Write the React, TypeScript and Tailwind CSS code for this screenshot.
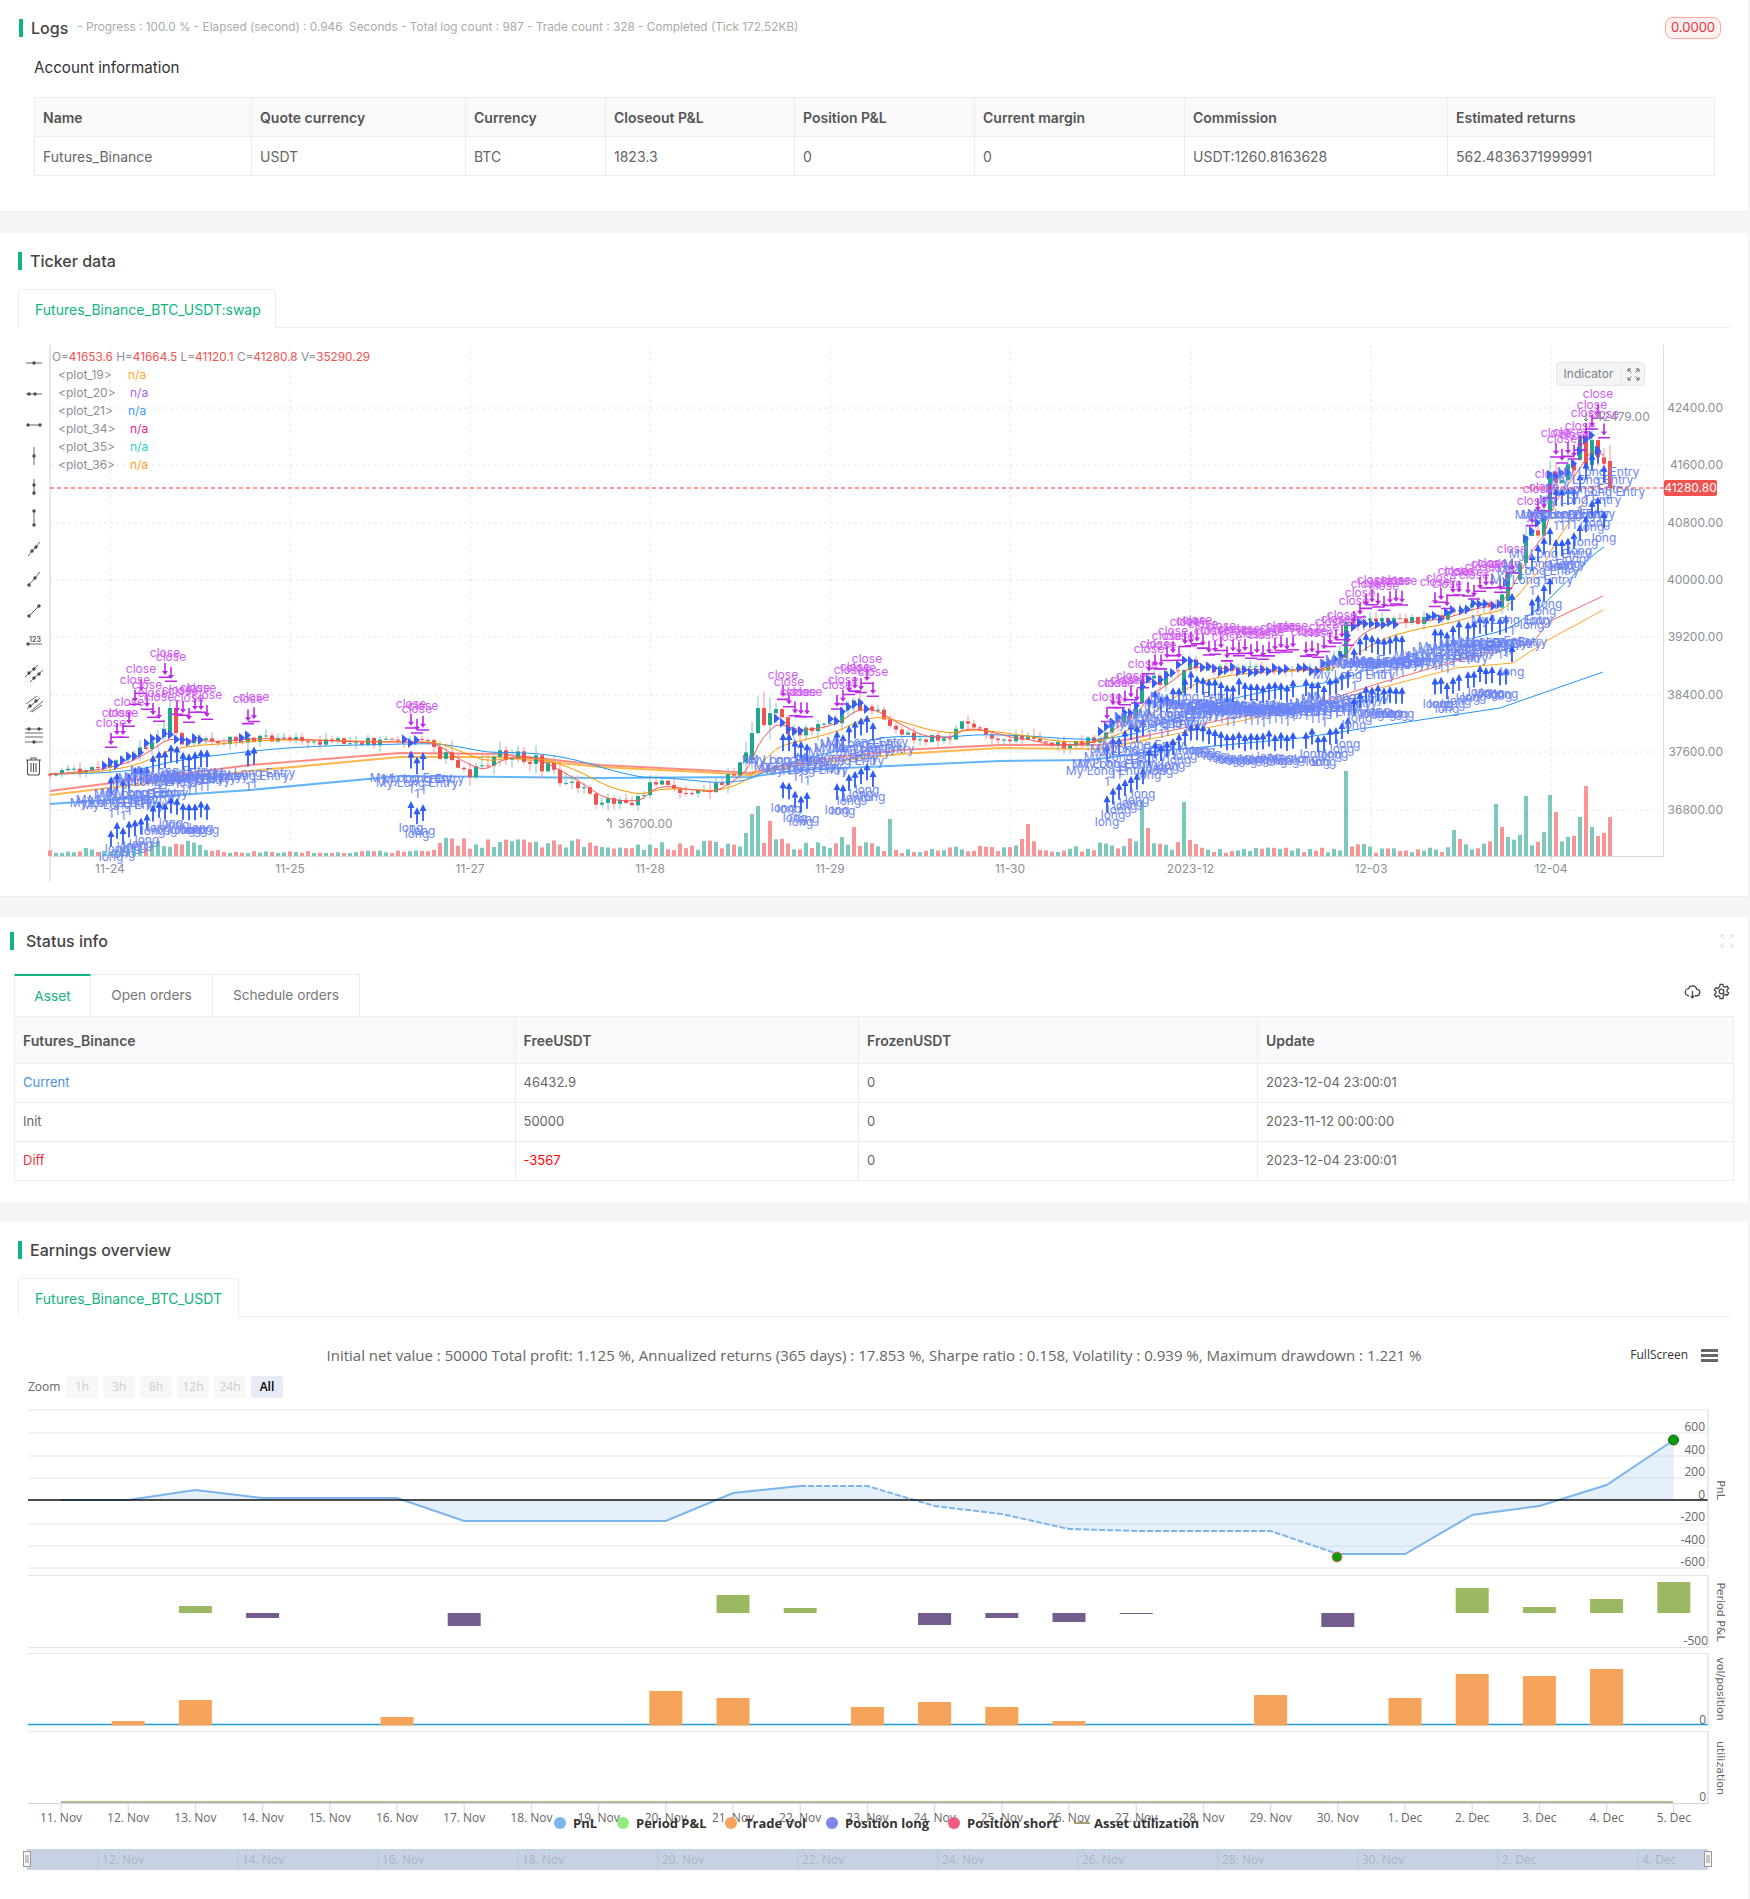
import React from "react";

// deterministic noise so the picture is the same on each load
let seed = 7;
const rnd = () => {
  seed = (seed * 16807) % 2147483647;
  return (seed % 10000) / 10000;
};

const interp = (pts: number[][], x: number) => {
  if (x <= pts[0][0]) return pts[0][1];
  for (let i = 1; i < pts.length; i++) {
    if (x <= pts[i][0]) {
      const [x0, y0] = pts[i - 1];
      const [x1, y1] = pts[i];
      return y0 + ((y1 - y0) * (x - x0)) / (x1 - x0);
    }
  }
  return pts[pts.length - 1][1];
};

const pricePath = [
  [50, 774], [100, 768], [130, 758], [165, 733], [180, 740], [210, 742], [250, 738], [350, 742], [400, 742], [430, 743],
  [455, 765], [480, 774], [500, 754], [530, 758], [570, 783], [600, 803], [620, 802], [640, 800], [650, 780], [680, 790],
  [710, 793], [725, 780], [745, 763], [757, 720], [775, 715], [790, 733], [815, 728], [835, 720], [855, 703], [880, 715],
  [885, 723], [920, 740], [950, 737], [960, 723], [985, 733], [1010, 740], [1025, 740], [1045, 747], [1080, 743], [1095, 740],
  [1110, 723], [1135, 710], [1145, 680], [1160, 683], [1185, 661], [1210, 669], [1270, 670], [1320, 669], [1345, 651], [1350, 626],
  [1370, 622], [1400, 622], [1440, 618], [1470, 606], [1500, 604], [1505, 583], [1525, 540], [1545, 518], [1550, 476], [1570, 469],
  [1590, 432], [1600, 458], [1610, 470],
];

const volZones = [
  [50, 7], [130, 12], [170, 24], [210, 8], [260, 5], [430, 6], [440, 24], [470, 20], [560, 20], [620, 13], [740, 18], [760, 40], [790, 14],
  [840, 22], [870, 16], [900, 7], [1000, 12], [1030, 18], [1060, 8], [1120, 18], [1150, 22], [1200, 9], [1340, 10], [1352, 18], [1380, 8], [1450, 10],
  [1500, 18], [1540, 32], [1610, 32],
];

// hand read peaks of the volume bars [height, red?]
const volPeaks: Record<number, [number, boolean]> = {
  1346: [85, false], 1184: [54, false], 1496: [52, false], 1502: [29, true], 1508: [19, false], 1526: [60, false], 1550: [61, false], 1556: [44, true],
  1586: [70, true], 1580: [39, false], 1610: [39, true], 1604: [23, true], 1592: [29, false], 1598: [20, true], 1454: [26, false], 1460: [17, true],
  442: [28, true], 466: [23, true], 758: [50, false], 752: [42, false], 770: [35, true], 746: [23, false], 890: [37, false], 854: [29, true], 1028: [32, true],
  1022: [17, true], 1142: [54, false], 1148: [28, true], 1190: [16, true], 1178: [14, true], 1196: [12, true],
};

// the tall bodies [open, close]
const bigBodies: Record<number, [number, number]> = {
  170: [735, 708], 176: [708, 733], 752: [760, 733], 758: [733, 708], 764: [708, 725], 1142: [703, 680], 1184: [693, 670], 1346: [658, 622],
  1508: [601, 572], 1520: [580, 563], 1526: [563, 536], 1550: [513, 472], 1580: [460, 436], 1586: [436, 465],
};

type Candle = { x: number; open: number; close: number; hi: number; lo: number; vol: number; up: boolean };

const candles: Candle[] = [];
let prev = 774;
for (let i = 0; i <= 260; i++) {
  const x = 50 + i * 6;
  const base = interp(volZones, x);
  const spread = Math.max(base, 12);
  const v = base * (0.35 + rnd() * 0.6);
  const close = interp(pricePath, x) + (rnd() - 0.5) * spread * 0.7;
  let open = i === 260 ? 461 : prev;
  let c = i === 260 ? 488 : close;
  if (bigBodies[x]) [open, c] = bigBodies[x];
  const hi = Math.min(open, c) - rnd() * spread * 0.55;
  const lo = Math.max(open, c) + rnd() * spread * 0.55;
  const peak = volPeaks[x];
  candles.push({ x, open, close: c, hi, lo, vol: peak ? peak[0] : Math.max(3, v), up: peak ? !peak[1] : c < open });
  prev = c;
}

// moving averages run over the smooth path, not the noisy closes
const ema = (n: number) => {
  const a = 2 / (n + 1);
  const out: string[] = [];
  let e = interp(pricePath, 50);
  for (let x = 50; x < 1610; x += 6) {
    e = e + a * (interp(pricePath, x) - e);
    out.push(`${x},${e.toFixed(1)}`);
  }
  return out.join(" ");
};

const slowBlue = [[50, 804], [250, 790], [400, 776], [600, 778], [750, 777], [800, 770], [1000, 761], [1090, 760], [1150, 752], [1300, 738], [1500, 708], [1603, 672]];
const slowRed = [[50, 791], [250, 765], [400, 753], [500, 754], [600, 765], [700, 770], [750, 773], [800, 762], [900, 750], [1000, 745], [1100, 745], [1150, 735], [1226, 719], [1303, 708], [1380, 683], [1456, 661], [1533, 643], [1548, 622], [1603, 596]];
const slowOrange = [[50, 795], [250, 771], [400, 757], [500, 757], [600, 767], [700, 772], [750, 775], [800, 765], [900, 754], [1000, 748], [1100, 749], [1150, 739], [1226, 724], [1303, 708], [1380, 688], [1456, 668], [1513, 663], [1548, 640], [1603, 610]];

const toPoints = (pts: number[][], from: number, to: number) =>
  pts.filter((p) => p[0] >= from && p[0] <= to).map((p) => p.join(",")).join(" ");

const tradeRanges = [
  { from: 105, to: 201, b: true }, { from: 242, to: 248, b: false }, { from: 405, to: 417, b: true }, { from: 777, to: 801, b: true },
  { from: 831, to: 872, b: true }, { from: 1101, to: 1290, b: true }, { from: 1300, to: 1400, b: true }, { from: 1429, to: 1456, b: true },
  { from: 1462, to: 1490, b: true }, { from: 1494, to: 1510, b: true }, { from: 1526, to: 1538, b: true }, { from: 1544, to: 1602, b: true },
];

// first cluster: where the "close" labels really sit
const firstClose = [727, 717, 717, 706, 684, 673, 689, 697, 701, 657, 661, 694, 695, 702, 692, 692, 699];

type Trade = { x: number; y: number; b: boolean; closeY: number; j: number[] };
const trades: Trade[] = [];
tradeRanges.forEach((r, ri) => {
  let k = 0;
  for (let x = r.from; x <= r.to; x += 6) {
    const y = interp(pricePath, x) + (rnd() - 0.5) * 6;
    const j = [rnd() * 5 - 2.5, rnd() * 5 - 2.5];
    trades.push({ x, y, b: r.b, closeY: ri === 0 && firstClose[k] ? firstClose[k] : y - 35 + rnd() * 10 - 5, j });
    k++;
  }
});

const gridY = [408, 465, 523, 580, 637, 695, 752, 810];
const priceLabels = ["42400.00", "41600.00", "40800.00", "40000.00", "39200.00", "38400.00", "37600.00", "36800.00"];
const gridX = [110, 290, 470, 650, 830, 1010, 1190.5, 1371, 1551];
const dateLabels = ["11-24", "11-25", "11-27", "11-28", "11-29", "11-30", "2023-12", "12-03", "12-04"];

const plots = [
  { name: "<plot_19>", x: 128, color: "#ffa726" },
  { name: "<plot_20>", x: 130, color: "#ab5fdc" },
  { name: "<plot_21>", x: 128, color: "#3b9ef5" },
  { name: "<plot_34>", x: 130, color: "#e91e8c" },
  { name: "<plot_35>", x: 130, color: "#1fd0c9" },
  { name: "<plot_36>", x: 130, color: "#ff9e1b" },
];

function Dot({ x, y }: { x: number; y: number }) {
  return <circle cx={x} cy={y} r={1.7} fill="#4b4b4b" />;
}

function Toolbar() {
  const s = { stroke: "#666", strokeWidth: 1, fill: "none" };
  return (
    <g>
      <line x1={26} x2={42} y1={363} y2={363} {...s} /><Dot x={34} y={363} />
      <line x1={26} x2={42} y1={394} y2={394} {...s} /><Dot x={29} y={394} /><Dot x={35} y={394} />
      <line x1={27} x2={41} y1={425} y2={425} {...s} /><Dot x={28} y={425} /><Dot x={40} y={425} />
      <line x1={34} x2={34} y1={447} y2={465} {...s} /><Dot x={34} y={456} />
      <line x1={34} x2={34} y1={479} y2={495} {...s} /><Dot x={34} y={485} /><Dot x={34} y={493} />
      <line x1={34} x2={34} y1={511} y2={525} {...s} /><Dot x={34} y={511} /><Dot x={34} y={525} />
      <line x1={28} x2={40} y1={556} y2={542} {...s} /><Dot x={32} y={551} /><Dot x={36} y={547} />
      <line x1={28} x2={40} y1={586} y2={572} {...s} /><Dot x={29} y={585} /><Dot x={35} y={578} />
      <line x1={28} x2={40} y1={617} y2={605} {...s} /><Dot x={29} y={616} /><Dot x={39} y={606} />
      <line x1={27} x2={42} y1={644} y2={644} {...s} /><Dot x={28} y={644} />
      <text x={35} y={642} fontSize={7} fontWeight={600} fill="#555" textAnchor="middle">123</text>
      <line x1={25} x2={38} y1={677} y2={665} {...s} /><Dot x={29} y={673} /><Dot x={34} y={669} />
      <line x1={30} x2={43} y1={682} y2={670} {...s} /><Dot x={34} y={678} /><Dot x={39} y={674} />
      <line x1={26} x2={37} y1={704} y2={696} {...s} />
      <line x1={27} x2={40} y1={709} y2={698} {...s} /><Dot x={30} y={706} /><Dot x={36} y={701} />
      <line x1={30} x2={43} y1={712} y2={701} {...s} />
      <line x1={32} x2={42} y1={712} y2={705} {...s} />
      {[729, 733, 737, 742].map((y) => <line key={y} x1={25} x2={43} y1={y} y2={y} {...s} />)}
      <Dot x={29} y={729} /><Dot x={39} y={729} /><Dot x={34} y={742} />
      <path d="M26 760h15M31 760v-2h5v2M27.5 760v13a2 2 0 0 0 2 2h8a2 2 0 0 0 2-2v-13M31 763v9M33.5 763v9M36 763v9" stroke="#555" strokeWidth={1.1} fill="none" />
    </g>
  );
}

function TickerChart() {
  return (
    <svg className="block w-[1748px] h-[552px]" viewBox="0 340 1748 552" fontFamily="Inter, sans-serif" fontSize={12}>
      {gridY.map((y) => <line key={y} x1={50} x2={1664} y1={y} y2={y} stroke="#e8e8e8" strokeDasharray="3 3" />)}
      {gridX.map((x) => <line key={x} x1={x} x2={x} y1={345} y2={856} stroke="#e8e8e8" strokeDasharray="3 3" />)}
      <line x1={50} x2={50} y1={345} y2={881} stroke="#ccc" />
      <line x1={1663.5} x2={1663.5} y1={345} y2={856} stroke="#ddd" />
      <line x1={50} x2={1664} y1={856.5} y2={856.5} stroke="#ddd" />
      <Toolbar />

      {candles.map((c) => (
        <rect key={c.x} x={c.x - 2} y={856 - c.vol} width={4} height={c.vol} fill={c.up ? "#7cc8bc" : "#f79696"} />
      ))}

      <polyline points={toPoints(slowBlue, 50, 1150)} fill="none" stroke="#64b5f6" strokeWidth={2} />
      <polyline points={toPoints(slowBlue, 1150, 1603)} fill="none" stroke="#2196f3" />
      <polyline points={toPoints(slowRed, 50, 1150)} fill="none" stroke="#ff8a80" strokeWidth={2} />
      <polyline points={toPoints(slowRed, 1150, 1603)} fill="none" stroke="#f66" />
      <polyline points={toPoints(slowOrange, 50, 1150)} fill="none" stroke="#ffb74d" strokeWidth={2} />
      <polyline points={toPoints(slowOrange, 1150, 1603)} fill="none" stroke="#ffa726" />

      {candles.map((c) => (
        <g key={c.x}>
          <line x1={c.x} x2={c.x} y1={c.hi} y2={c.lo} stroke={c.close < c.open ? "#7cc8bc" : "#f79696"} />
          <rect x={c.x - 2} y={Math.min(c.open, c.close)} width={4} height={Math.max(1, Math.abs(c.open - c.close))} fill={c.close < c.open ? "#22a78f" : "#ef5350"} />
        </g>
      ))}

      <polyline points={ema(40)} fill="none" stroke="#2196f3" />
      <polyline points={ema(14)} fill="none" stroke="#ff9800" />
      <polyline points={ema(5)} fill="none" stroke="#f55" />

      {trades.map((t) => (
        <g key={t.x}>
          <path d={`M${t.x - 3} ${t.y - 5}L${t.x + 3} ${t.y}L${t.x - 3} ${t.y + 5}Z`} fill="#3b5cf6" />
          <g transform={`translate(${t.x + 6} ${t.closeY})`}>
            <text y={0} textAnchor="middle" fill="#d05cf5">close</text>
            <path d="M-0.8 6h1.600v9h-1.600z M-3 14h6l-3 4z M-6 19.500h12v1.600h-12z" fill="#c026e8" />
          </g>
          <g transform={`translate(${t.x + 6} ${t.y + t.j[0]})`}>
            <path d="M-0.9 18h1.800v12h-1.800z M-3.500 19L0 12L3.500 19Z" fill="#2f5bf5" />
            <text y={43} textAnchor="middle" fill="#6a84f5">My Long Entry</text>
            <text y={54} textAnchor="middle" fill="#6a84f5">1</text>
          </g>
          {t.b && (
            <g transform={`translate(${t.x + 6} ${t.y + t.j[1]})`}>
              <path d="M-0.9 68h1.800v11h-1.800z M-3.500 69L0 62L3.500 69Z" fill="#2f5bf5" />
              <text y={93} textAnchor="middle" fill="#6a84f5">long</text>
            </g>
          )}
        </g>
      ))}

      <line x1={50} x2={1664} y1={488} y2={488} stroke="#f33" strokeDasharray="4 3" />
      <rect x={1664} y={480} width={53} height={16} rx={2} fill="#ef5350" />
      <text x={1690.5} y={492} textAnchor="middle" fill="#fff">41280.80</text>

      {gridY.map((y, i) => <text key={y} x={1723} y={y + 4} textAnchor="end" fill="#8b8f97">{priceLabels[i]}</text>)}
      {gridX.map((x, i) => (
        <g key={x}>
          <line x1={x} x2={x} y1={856} y2={860} stroke="#ccc" />
          <text x={x} y={873} textAnchor="middle" fill="#8b8f97">{dateLabels[i]}</text>
        </g>
      ))}

      <text x={52} y={361} fill="#8b8f97" fontSize={11.8}>
        O=<tspan fill="#ef5350">41653.6</tspan> H=<tspan fill="#ef5350">41664.5</tspan> L=<tspan fill="#ef5350">41120.1</tspan> C=<tspan fill="#ef5350">41280.8</tspan> V=<tspan fill="#ef5350">35290.29</tspan>
      </text>
      {plots.map((p, i) => (
        <g key={p.name}>
          <text x={58} y={379 + i * 18} fill="#8b8f97">{p.name}</text>
          <text x={p.x} y={379 + i * 18} fill={p.color}>n/a</text>
        </g>
      ))}

      <path d="M607 820h4v8M607 820l2-2M607 820l2 2" stroke="#777" fill="none" />
      <text x={618} y={828} fill="#8b8f97">36700.00</text>
      <path d="M1586 413v8M1584 419l2 2l2-2" stroke="#777" fill="none" />
      <text x={1595} y={421} fill="#8b8f97">42479.00</text>

      <rect x={1556.5} y={362.5} width={88} height={23} rx={3} fill="#f3f4f6" stroke="#e5e7eb" />
      <line x1={1621.5} x2={1621.5} y1={363} y2={385} stroke="#e5e7eb" />
      <text x={1588.5} y={378} textAnchor="middle" fill="#7b7f87">Indicator</text>
      <path d="M1628 369l3.5 3.5M1628 369v3M1628 369h3M1639 369l-3.5 3.5M1639 369v3M1639 369h-3M1628 380l3.5-3.5M1628 380v-3M1628 380h3M1639 380l-3.5-3.5M1639 380v-3M1639 380h-3" stroke="#666" fill="none" />
    </svg>
  );
}

const days = ["11. Nov", "12. Nov", "13. Nov", "14. Nov", "15. Nov", "16. Nov", "17. Nov", "18. Nov", "19. Nov", "20. Nov", "21. Nov", "22. Nov", "23. Nov", "24. Nov", "25. Nov", "26. Nov", "27. Nov", "28. Nov", "29. Nov", "30. Nov", "1. Dec", "2. Dec", "3. Dec", "4. Dec", "5. Dec"];
const dayX = (i: number) => 61 + i * 67.2;
const pnl = [1500, 1500, 1490, 1498, 1498, 1498, 1521, 1521, 1521, 1521, 1493, 1486, 1486, 1506, 1514, 1529, 1531, 1531, 1531, 1554, 1554, 1515, 1506, 1485, 1440];

const periodBars = [
  { i: 2, y0: 1606, y1: 1613, c: "#9bb862" }, { i: 3, y0: 1613, y1: 1618, c: "#745d8e" }, { i: 6, y0: 1613, y1: 1626, c: "#745d8e" },
  { i: 10, y0: 1595, y1: 1613, c: "#9bb862" }, { i: 11, y0: 1608, y1: 1613, c: "#9bb862" }, { i: 13, y0: 1613, y1: 1625, c: "#745d8e" },
  { i: 14, y0: 1613, y1: 1618, c: "#745d8e" }, { i: 15, y0: 1613, y1: 1622, c: "#745d8e" }, { i: 16, y0: 1613, y1: 1614, c: "#745d8e" },
  { i: 19, y0: 1613, y1: 1627, c: "#745d8e" }, { i: 21, y0: 1588, y1: 1613, c: "#9bb862" }, { i: 22, y0: 1607, y1: 1613, c: "#9bb862" },
  { i: 23, y0: 1599, y1: 1613, c: "#9bb862" }, { i: 24, y0: 1582, y1: 1613, c: "#9bb862" },
];
const volBars = [[1, 1721], [2, 1700], [5, 1717], [9, 1691], [10, 1698], [12, 1707], [13, 1702], [14, 1707], [15, 1721], [18, 1695], [20, 1698], [21, 1674], [22, 1676], [23, 1669]];

const pnlTicks = [["600", 1431], ["400", 1454], ["200", 1476], ["0", 1499], ["-200", 1521], ["-400", 1544], ["-600", 1566]] as [string, number][];
const navLabels = ["12. Nov", "14. Nov", "16. Nov", "18. Nov", "20. Nov", "22. Nov", "24. Nov", "26. Nov", "28. Nov", "30. Nov", "2. Dec", "4. Dec"];

const legend = [
  { label: "PnL", dot: 560, tx: 573, c: "#7cb5ec" },
  { label: "Period P&L", dot: 623, tx: 636, c: "#90ed7d" },
  { label: "Trade Vol", dot: 731, tx: 745, c: "#f7a35c" },
  { label: "Position long", dot: 832, tx: 845, c: "#8085e9" },
  { label: "Position short", dot: 954, tx: 967, c: "#f15c80" },
];

const axisTitles: [string, number][] = [["PnL", 1490], ["Period P&L", 1612], ["vol/position", 1689], ["utilization", 1768]];

function EarningsChart() {
  const line = pnl.map((y, i) => `${dayX(i)},${y}`);
  return (
    <svg className="block w-[1748px] h-[475px]" viewBox="0 1400 1748 475" fontFamily="'Open Sans', sans-serif" fontSize={12}>
      {[1410, 1433, 1456, 1478, 1524, 1546, 1568].map((y) => <line key={y} x1={28} x2={1708} y1={y} y2={y} stroke="#e6e6e6" />)}
      <polygon points={`${dayX(0)},1500 ${line.join(" ")} ${dayX(24)},1500`} fill="#7cb5ec" fillOpacity={0.2} />
      <polyline points={line.slice(0, 12).join(" ")} fill="none" stroke="#7cb5ec" strokeWidth={2} />
      <polyline points={line.slice(11, 20).join(" ")} fill="none" stroke="#7cb5ec" strokeWidth={2} strokeDasharray="6 2" />
      <polyline points={line.slice(19).join(" ")} fill="none" stroke="#7cb5ec" strokeWidth={2} />
      <line x1={28} x2={1708} y1={1500} y2={1500} stroke="#111" strokeWidth={1.5} />
      <circle cx={1673.5} cy={1440} r={5} fill="#0a9a0a" stroke="#1a5a1a" />
      <circle cx={1337} cy={1557} r={5} fill="#0a9a0a" stroke="#f66" />
      {pnlTicks.map(([t, y]) => <text key={t} x={1705} y={y} textAnchor="end" fill="#666">{t}</text>)}
      <line x1={1708} x2={1708} y1={1410} y2={1568} stroke="#ccd6eb" />

      <line x1={28} x2={1708} y1={1575.5} y2={1575.5} stroke="#e6e6e6" />
      <line x1={28} x2={1708} y1={1647.5} y2={1647.5} stroke="#e6e6e6" />
      {periodBars.map((b) => <rect key={b.i} x={dayX(b.i) - 16.5} y={b.y0} width={33} height={b.y1 - b.y0} fill={b.c} />)}
      <text x={1708} y={1645} textAnchor="end" fill="#666">-500</text>
      <line x1={1708} x2={1708} y1={1575} y2={1648} stroke="#ccd6eb" />

      <line x1={28} x2={1708} y1={1653.5} y2={1653.5} stroke="#e6e6e6" />
      <line x1={28} x2={1708} y1={1724.5} y2={1724.5} stroke="#1f9cd6" strokeWidth={1.6} />
      {volBars.map(([i, y]) => <rect key={i} x={dayX(i) - 16.5} y={y} width={33} height={1725.5 - y} fill="#f6a35c" />)}
      <text x={1706} y={1724} textAnchor="end" fill="#666">0</text>
      <line x1={1708} x2={1708} y1={1653} y2={1726} stroke="#ccd6eb" />

      <line x1={28} x2={1708} y1={1731.5} y2={1731.5} stroke="#e6e6e6" />
      <line x1={28} x2={1708} y1={1803.5} y2={1803.5} stroke="#ccd6eb" />
      <line x1={61} x2={1673} y1={1802} y2={1802} stroke="#a89f72" strokeWidth={1.5} />
      <text x={1706} y={1801} textAnchor="end" fill="#666">0</text>
      <line x1={1708} x2={1708} y1={1731} y2={1804} stroke="#ccd6eb" />

      {days.map((d, i) => (
        <g key={d}>
          <line x1={dayX(i)} x2={dayX(i)} y1={1803} y2={1813} stroke="#ccd6eb" />
          <text x={dayX(i)} y={1822} textAnchor="middle" fill="#666">{d}</text>
        </g>
      ))}

      {axisTitles.map(([t, y]) => (
        <text key={t} x={1717} y={y} textAnchor="middle" fill="#666" transform={`rotate(90 1717 ${y})`} fontFamily="'DejaVu Sans', sans-serif" fontSize={11}>{t}</text>
      ))}

      {legend.map((l) => (
        <g key={l.label}>
          <circle cx={l.dot} cy={1823} r={6} fill={l.c} />
          <text x={l.tx} y={1828} fontSize={13} fontWeight={700} fill="#333">{l.label}</text>
        </g>
      ))}
      <line x1={1074} x2={1090} y1={1823} y2={1823} stroke="#a89f72" strokeWidth={2} />
      <text x={1094} y={1828} fontSize={13} fontWeight={700} fill="#333">Asset utilization</text>

      <rect x={27} y={1849} width={1681} height={21} fill="#c6d2e3" />
      {navLabels.map((l, i) => (
        <g key={l}>
          <line x1={98 + i * 140} x2={98 + i * 140} y1={1849} y2={1870} stroke="#b8c5d8" />
          <text x={102 + i * 140} y={1864} fill="#a9b5c5">{l}</text>
        </g>
      ))}
      {[27, 1708].map((x) => (
        <g key={x}>
          <rect x={x - 3.5} y={1851.5} width={7} height={15} fill="#f5f5f5" stroke="#999" />
          <path d={`M${x - 1} 1855v8M${x + 1} 1855v8`} stroke="#999" />
        </g>
      ))}
    </svg>
  );
}

function SectionTitle({ title, barClass, children }: { title: string; barClass: string; children?: React.ReactNode }) {
  return (
    <div className="flex items-center h-[18px]">
      <div className={`w-[4px] h-[18px] bg-[#10b482] ${barClass}`}></div>
      <span className="text-[16px] leading-[18px] font-medium text-[#444]">{title}</span>
      {children}
    </div>
  );
}

function GreenTab({ label, widthClass }: { label: string; widthClass: string }) {
  return (
    <div className="flex ml-[18px] mr-[18px] h-[39px] border-b border-[#ebedf0]">
      <div className={`h-[39px] bg-white border border-b-0 border-[#ebedf0] rounded-t-[3px] flex items-center pl-[16px] text-[14px] text-[#10b482] ${widthClass}`}>
        {label}
      </div>
    </div>
  );
}

const accountHead = ["Name", "Quote currency", "Currency", "Closeout P&L", "Position P&L", "Current margin", "Commission", "Estimated returns"];
const accountRow = ["Futures_Binance", "USDT", "BTC", "1823.3", "0", "0", "USDT:1260.8163628", "562.4836371999991"];

const assetRows = [
  { name: "Current", nameClass: "text-[#4a90e2]", free: "46432.9", freeClass: "text-[#666]", update: "2023-12-04 23:00:01" },
  { name: "Init", nameClass: "text-[#666]", free: "50000", freeClass: "text-[#666]", update: "2023-11-12 00:00:00" },
  { name: "Diff", nameClass: "text-[#e5343d]", free: "-3567", freeClass: "text-[#f00]", update: "2023-12-04 23:00:01" },
];

const thClass = "border border-[#ebedf0] bg-[#fafafa] px-[8px] text-left font-semibold text-[#555]";
const tdClass = "border border-[#ebedf0] px-[8px]";

export default function App() {
  return (
    <div className="w-[1750px] h-[1899px] bg-[#f4f5f7] font-[Inter,sans-serif] text-[14px] overflow-hidden">
      {/* Logs */}
      <div className="w-[1748px] h-[212px] bg-white border-b border-[#ebedf0] pt-[19px]">
        <div className="flex items-center justify-between h-[18px] pl-[19px] pr-[27px]">
          <SectionTitle title="Logs" barClass="mr-[8px]">
            <span className="ml-[9px] text-[11.8px] text-[#aaa] whitespace-pre">- Progress : 100.0 % - Elapsed (second) : 0.946  Seconds - Total log count : 987 - Trade count : 328 - Completed (Tick 172.52KB)</span>
          </SectionTitle>
          <span className="h-[22px] w-[56px] flex items-center justify-center rounded-[8px] border border-[#ffa39e] bg-[#fff1f0] text-[13px] text-[#e5343d]">0.0000</span>
        </div>
        <div className="ml-[34px] mt-[19px] h-[24px] leading-[24px] text-[15.2px] text-[#333]">Account information</div>
        <table className="ml-[34px] mt-[17px] w-[1680px] table-fixed border-collapse">
          <colgroup>
            <col className="w-[217px]" /><col className="w-[214px]" /><col className="w-[140px]" /><col className="w-[189px]" />
            <col className="w-[180px]" /><col className="w-[210px]" /><col className="w-[263px]" /><col className="w-[267px]" />
          </colgroup>
          <thead>
            <tr className="h-[39px]">{accountHead.map((h) => <th key={h} className={thClass}>{h}</th>)}</tr>
          </thead>
          <tbody>
            <tr className="h-[39px]">{accountRow.map((c, i) => <td key={i} className={`${tdClass} text-[#666]`}>{c}</td>)}</tr>
          </tbody>
        </table>
      </div>
      <div className="h-[21px]"></div>

      {/* Ticker */}
      <div className="w-[1748px] h-[664px] bg-white border-b border-[#ebedf0] pt-[19px]">
        <div className="pl-[18px]"><SectionTitle title="Ticker data" barClass="mr-[8px]" /></div>
        <div className="mt-[19px]"><GreenTab label="Futures_Binance_BTC_USDT:swap" widthClass="w-[258px]" /></div>
        <div className="mt-[12px]"><TickerChart /></div>
      </div>
      <div className="h-[20px]"></div>

      {/* Status */}
      <div className="w-[1748px] h-[285px] bg-white pt-[15px]">
        <div className="flex items-center justify-between pl-[10px] pr-[14px]">
          <SectionTitle title="Status info" barClass="mr-[12px]" />
          <svg width="14" height="14" viewBox="0 0 14 14" fill="none" stroke="#ddd"><path d="M1 1l4 4M1 1v3M1 1h3M13 1l-4 4M13 1v3M13 1h-3M1 13l4-4M1 13v-3M1 13h3M13 13l-4-4M13 13v-3M13 13h-3" /></svg>
        </div>
        <div className="mt-[24px] ml-[14px] w-[1719px] flex justify-between items-end h-[42px]">
          <div className="flex h-[42px] text-[13.7px]">
            <div className="w-[77px] flex items-center justify-center border-t-2 border-t-[#10b482] border-r border-l border-[#ebedf0] text-[#10b482]">Asset</div>
            <div className="w-[122px] flex items-center justify-center border-t border-r border-[#ebedf0] text-[#777]">Open orders</div>
            <div className="w-[147px] flex items-center justify-center border-t border-r border-[#ebedf0] text-[#777]">Schedule orders</div>
          </div>
          <div className="flex items-center gap-[12px] mb-[16px] mr-[3px]">
            <svg width="17" height="17" viewBox="0 0 24 24" fill="none" stroke="#444" strokeWidth="1.8"><path d="M7 18a5 5 0 0 1-.5-10A6 6 0 0 1 18 9a4.5 4.5 0 0 1-.5 9H15" /><path d="M12 11v10M9.5 18.5L12 21l2.5-2.5" /></svg>
            <svg width="17" height="17" viewBox="0 0 24 24" fill="none" stroke="#444" strokeWidth="1.8"><circle cx="12" cy="12" r="3.2" /><path d="M10 2h4l.6 3 2.4 1 2.6-1.6 2.4 3.4-2.2 2 .2 2.4 2.2 2-2.4 3.4-2.6-1.6-2.4 1L14 22h-4l-.6-3-2.4-1-2.6 1.6L2 16.2l2.2-2-.2-2.4-2.2-2L4.400 6.400 7 8l2.400-3z" /></svg>
          </div>
        </div>
        <table className="ml-[14px] w-[1719px] table-fixed border-collapse">
          <colgroup>
            <col className="w-[500.5px]" /><col className="w-[343.5px]" /><col className="w-[399px]" /><col className="w-[476px]" />
          </colgroup>
          <thead>
            <tr className="h-[47px]">
              <th className={thClass}>Futures_Binance</th><th className={thClass}>FreeUSDT</th><th className={thClass}>FrozenUSDT</th><th className={thClass}>Update</th>
            </tr>
          </thead>
          <tbody>
            {assetRows.map((r) => (
              <tr key={r.name} className="h-[39px] text-[13px]">
                <td className={`${tdClass} ${r.nameClass}`}>{r.name}</td>
                <td className={`${tdClass} ${r.freeClass}`}>{r.free}</td>
                <td className={`${tdClass} text-[#666]`}>0</td>
                <td className={`${tdClass} text-[#666]`}>{r.update}</td>
              </tr>
            ))}
          </tbody>
        </table>
      </div>
      <div className="h-[20px]"></div>

      {/* Earnings */}
      <div className="w-[1748px] h-[677px] bg-white pt-[19px]">
        <div className="pl-[18px]"><SectionTitle title="Earnings overview" barClass="mr-[8px]" /></div>
        <div className="mt-[19px]"><GreenTab label="Futures_Binance_BTC_USDT" widthClass="w-[221px]" /></div>
        <div className="mt-[27px] px-[30px] h-[22px] grid grid-cols-[1fr_auto_1fr] items-center font-['Open_Sans',sans-serif]">
          <div></div>
          <div className="text-[15px] text-[#666] whitespace-nowrap">Initial net value : 50000 Total profit: 1.125 %, Annualized returns (365 days) : 17.853 %, Sharpe ratio : 0.158, Volatility : 0.939 %, Maximum drawdown : 1.221 %</div>
          <div className="flex items-center justify-end gap-[13px]">
            <span className="text-[12px] text-[#333]">FullScreen</span>
            <div className="flex flex-col gap-[2px] w-[17px]">
              <div className="h-[3px] bg-[#666]"></div><div className="h-[3px] bg-[#666]"></div><div className="h-[3px] bg-[#666]"></div>
            </div>
          </div>
        </div>
        <div className="mt-[10px] ml-[28px] h-[22px] flex items-center gap-[5px] font-['Open_Sans',sans-serif] text-[12px]">
          <span className="w-[33px] text-[#666]">Zoom</span>
          {["1h", "3h", "8h", "12h", "24h"].map((z) => (
            <span key={z} className="w-[32px] h-[22px] rounded-[2px] bg-[#f7f7f7] text-[#ccc] flex items-center justify-center">{z}</span>
          ))}
          <span className="w-[32px] h-[22px] rounded-[2px] bg-[#e6ebf5] text-black font-semibold flex items-center justify-center">All</span>
        </div>
        <div className="mt-[2px]"><EarningsChart /></div>
      </div>
    </div>
  );
}
